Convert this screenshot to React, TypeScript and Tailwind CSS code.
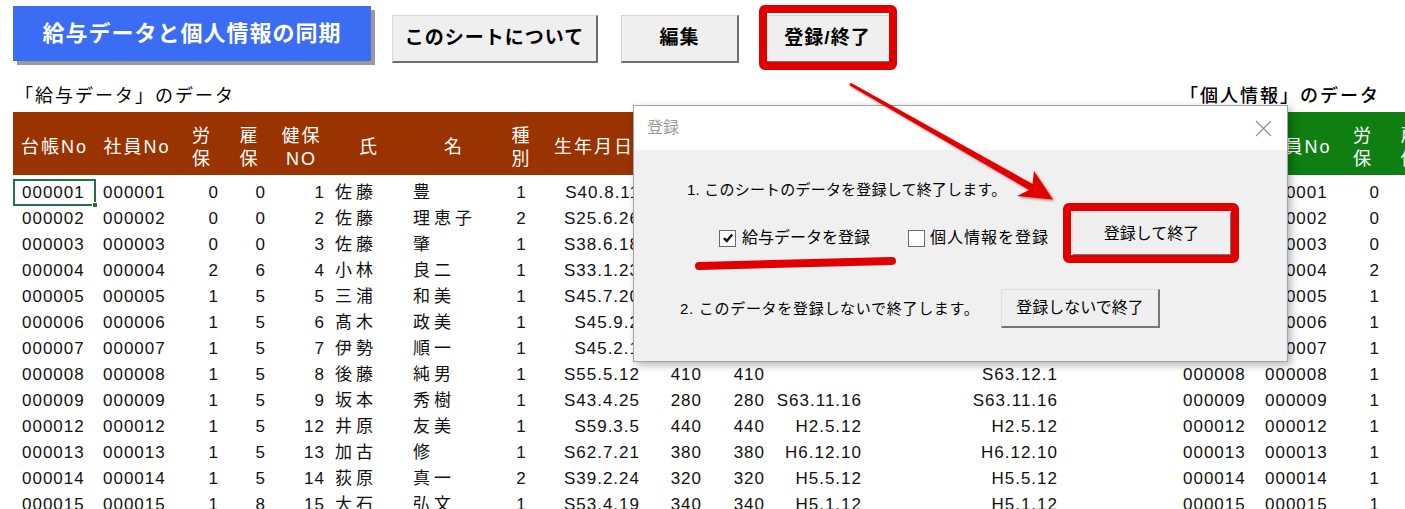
import React from 'react';

type Col = { w: string; td: string };

const leftCols: Col[] = [
    { w: 'w-[83px]', td: 'pl-[9px]' },
    { w: 'w-[82px]', td: 'pl-[7px]' },
    { w: 'w-[48px]', td: 'text-right pr-[7px]' },
    { w: 'w-[47px]', td: 'text-right pr-[7px]' },
    { w: 'w-[57px]', td: 'text-right pr-[5px]' },
    { w: 'w-[78px]', td: 'pl-[5px] tracking-[4px]' },
    { w: 'w-[92px]', td: 'pl-[5px] tracking-[4px]' },
    { w: 'w-[43px]', td: 'text-center' },
    { w: 'w-[102px]', td: 'text-right pr-[5px]' },
    { w: 'w-[62px]', td: 'text-right pr-[5px]' },
    { w: 'w-[63px]', td: 'text-right pr-[5px]' },
    { w: 'w-[97px]', td: 'text-right pr-[5px]' },
    { w: 'w-[196px]', td: 'text-right pr-[5px]' },
    { w: 'w-[111px]', td: '' },
];

const rightCols: Col[] = [
    { w: 'w-[83px]', td: 'pl-[9px]' },
    { w: 'w-[82px]', td: 'pl-[8px]' },
    { w: 'w-[48px]', td: 'text-right pr-[7px]' },
    { w: 'w-[47px]', td: 'text-right pr-[7px]' },
];

const leftHeaders = [
    ['台帳No'], ['社員No'], ['労', '保'], ['雇', '保'], ['健保', 'NO'], ['氏'], ['名'], ['種', '別'],
    ['生年月日'], ['標準', '報酬'], ['算定', '報酬'], ['資格', '取得日'], ['入社日'], [''],
];
const rightHeaders = [['台帳No'], ['社員No'], ['労', '保'], ['雇', '保']];

// 台帳No, 社員No, 労保, 雇保, 健保NO, 氏, 名, 種別, 生年月日, 標準, 算定, 資格取得日, 入社日
const rows: string[][] = [
    ['000001', '000001', '0', '0', '1', '佐藤', '豊', '1', 'S40.8.11', '360', '360', 'S63.4.1', 'S63.4.1', ''],
    ['000002', '000002', '0', '0', '2', '佐藤', '理恵子', '2', 'S25.6.26', '300', '300', 'S63.4.1', 'S63.4.1', ''],
    ['000003', '000003', '0', '0', '3', '佐藤', '肇', '1', 'S38.6.18', '300', '300', 'S63.4.1', 'S63.4.1', ''],
    ['000004', '000004', '2', '6', '4', '小林', '良二', '1', 'S33.1.23', '380', '380', 'S63.4.1', 'S63.4.1', ''],
    ['000005', '000005', '1', '5', '5', '三浦', '和美', '1', 'S45.7.20', '320', '320', 'S63.4.1', 'S63.4.1', ''],
    ['000006', '000006', '1', '5', '6', '髙木', '政美', '1', 'S45.9.2', '300', '300', 'S63.4.1', 'S63.4.1', ''],
    ['000007', '000007', '1', '5', '7', '伊勢', '順一', '1', 'S45.2.1', '300', '300', 'S63.4.1', 'S63.4.1', ''],
    ['000008', '000008', '1', '5', '8', '後藤', '純男', '1', 'S55.5.12', '410', '410', '', 'S63.12.1', ''],
    ['000009', '000009', '1', '5', '9', '坂本', '秀樹', '1', 'S43.4.25', '280', '280', 'S63.11.16', 'S63.11.16', ''],
    ['000012', '000012', '1', '5', '12', '井原', '友美', '1', 'S59.3.5', '440', '440', 'H2.5.12', 'H2.5.12', ''],
    ['000013', '000013', '1', '5', '13', '加古', '修', '1', 'S62.7.21', '380', '380', 'H6.12.10', 'H6.12.10', ''],
    ['000014', '000014', '1', '5', '14', '荻原', '真一', '2', 'S39.2.24', '320', '320', 'H5.5.12', 'H5.5.12', ''],
    ['000015', '000015', '1', '8', '15', '大石', '弘文', '1', 'S53.4.19', '340', '340', 'H5.1.12', 'H5.1.12', ''],
];

function HeaderRow({ cols, labels, bg }: { cols: Col[]; labels: string[][]; bg: string }) {
    return (
        <div className={`flex h-[63px] pt-[8px] text-[18px] tracking-[2px] text-white ${bg}`}>
            {cols.map((c, i) => (
                <div key={i} className={`${c.w} shrink-0 flex flex-col items-center justify-center leading-[23px]`}>
                    {labels[i].map((l, j) => (
                        <span key={j} className="whitespace-nowrap">{l}</span>
                    ))}
                </div>
            ))}
        </div>
    );
}

function SheetButton({ label, className }: { label: string; className: string }) {
    return (
        <div
            className={`flex h-[48px] items-center justify-center border-t border-l border-[#d6d6d6] border-r-2 border-b-2 border-r-[#6f6f6f] border-b-[#6f6f6f] bg-[#efefef] text-[19px] font-bold tracking-[1px] text-black ${className}`}
        >
            {label}
        </div>
    );
}

function DialogButton({ label, className }: { label: string; className: string }) {
    return (
        <div
            className={`flex items-center justify-center border-t border-l border-[#dedede] border-r-2 border-b-2 border-r-[#777] border-b-[#777] bg-[#efefef] text-[16px] text-black ${className}`}
        >
            {label}
        </div>
    );
}

function CheckBox({ checked }: { checked: boolean }) {
    return (
        <div className="flex h-[17px] w-[17px] shrink-0 items-center justify-center border border-[#6a6a6a] bg-white">
            {checked && (
                <svg width="12" height="12" viewBox="0 0 12 12">
                    <path d="M2 6.2 L4.8 9 L10.2 2.6" fill="none" stroke="#111" strokeWidth="2.4" />
                </svg>
            )}
        </div>
    );
}

function Dialog() {
    return (
        <div className="absolute left-[633px] top-[105px] flex h-[257px] w-[655px] flex-col border border-[#a3a3a3] bg-[#f0f0f0] shadow-[3px_3px_8px_rgba(0,0,0,0.3)]">
            <div className="flex h-[44px] items-center justify-between bg-white pl-[13px] pr-[15px]">
                <span className="text-[16px] text-[#9b9b9b]">登録</span>
                <svg width="17" height="17" viewBox="0 0 17 17">
                    <path d="M1 1 L16 16 M16 1 L1 16" stroke="#8c8c8c" strokeWidth="1.1" />
                </svg>
            </div>
            <div className="flex flex-1 flex-col pt-[29px] text-black">
                <div className="pl-[53px] text-[15px] leading-[22px] tracking-[0.2px]">
                    1. このシートのデータを登録して終了します。
                </div>
                <div className="mt-[11px] flex items-start pl-[85px]">
                    <div className="mt-[17px] flex w-[189px] items-center gap-[6px]">
                        <CheckBox checked />
                        <span className="text-[16px] leading-[18px]">給与データを登録</span>
                    </div>
                    <div className="mt-[17px] flex w-[164px] items-center gap-[5px]">
                        <CheckBox checked={false} />
                        <span className="text-[16px] leading-[18px] tracking-[1px]">個人情報を登録</span>
                    </div>
                    <DialogButton label="登録して終了" className="h-[44px] w-[160px]" />
                </div>
                <div className="mt-[33px] flex items-center pl-[46px]">
                    <div className="w-[321px] text-[15px] leading-[22px] tracking-[0.7px]">
                        2. このデータを登録しないで終了します。
                    </div>
                    <DialogButton label="登録しないで終了" className="h-[39px] w-[159px]" />
                </div>
            </div>
        </div>
    );
}

function Annotations() {
    return (
        <svg className="pointer-events-none absolute left-0 top-0" width="1405" height="509" viewBox="0 0 1405 509">
            <defs>
                <filter id="redShadow" x="-10%" y="-10%" width="130%" height="130%">
                    <feDropShadow dx="1.5" dy="1.5" stdDeviation="1" floodColor="#550000" floodOpacity="0.45" />
                </filter>
            </defs>
            <rect x="763" y="9" width="130" height="57" rx="2" fill="none" stroke="#e00000" strokeWidth="8" strokeLinejoin="round" />
            <rect x="1067" y="207" width="168" height="52" rx="2" fill="none" stroke="#e00000" strokeWidth="8" strokeLinejoin="round" />
            <polygon
                points="850.7,82.7 1032.5,184 1034,171 1053,199.5 1017,196 1029.1,190 849.3,85.3"
                fill="#e00000"
                filter="url(#redShadow)"
            />
            <line x1="699" y1="266" x2="892" y2="261" stroke="#e00000" strokeWidth="8" strokeLinecap="round" />
        </svg>
    );
}

export default function App() {
    return (
        <div className="relative h-[509px] w-[1405px] overflow-hidden bg-white font-['Liberation_Sans','Noto_Sans_CJK_JP',sans-serif] text-[#111]">
            <div className="flex h-[70px] items-start pl-[13px]">
                <div className="mt-[6px] flex h-[55px] w-[358px] items-center justify-center bg-[#3b6cf4] text-[22px] font-bold tracking-[1px] text-white shadow-[4px_4px_0_#999]">
                    給与データと個人情報の同期
                </div>
                <SheetButton label="このシートについて" className="ml-[21px] mt-[15px] w-[206px]" />
                <SheetButton label="編集" className="ml-[23px] mt-[15px] w-[118px]" />
                <SheetButton label="登録/終了" className="ml-[25px] mt-[15px] w-[128px]" />
            </div>

            <div className="flex h-[42px] items-end justify-between pb-[4px] pl-[15px] pr-[25px] text-[18px] leading-[24px] tracking-[2px] text-black">
                <span>「給与データ」のデータ</span>
                <span className="font-medium">「個人情報」のデータ</span>
            </div>

            <div className="flex pl-[13px]">
                <div className="w-[1161px] shrink-0">
                    <HeaderRow cols={leftCols} labels={leftHeaders} bg="bg-[#993300]" />
                    <div className="pt-[5px] text-[17px] tracking-[1px]">
                        {rows.map((r, ri) => (
                            <div key={ri} className="flex h-[26px] items-center leading-[26px]">
                                {leftCols.map((c, ci) => (
                                    <div key={ci} className={`${c.w} ${c.td} relative shrink-0 whitespace-nowrap`}>
                                        {r[ci]}
                                        {ri === 0 && ci === 0 && (
                                            <div className="absolute inset-x-0 -top-[1px] bottom-[0px] border-2 border-[#217346]">
                                                <div className="absolute -bottom-[4px] -right-[4px] h-[6px] w-[6px] border border-white bg-[#217346]" />
                                            </div>
                                        )}
                                    </div>
                                ))}
                            </div>
                        ))}
                    </div>
                </div>
                <div className="w-[260px] shrink-0">
                    <HeaderRow cols={rightCols} labels={rightHeaders} bg="bg-[#0f7f12]" />
                    <div className="pt-[5px] text-[17px] tracking-[1px]">
                        {rows.map((r, ri) => (
                            <div key={ri} className="flex h-[26px] items-center leading-[26px]">
                                {rightCols.map((c, ci) => (
                                    <div key={ci} className={`${c.w} ${c.td} shrink-0 whitespace-nowrap`}>
                                        {r[ci]}
                                    </div>
                                ))}
                            </div>
                        ))}
                    </div>
                </div>
            </div>

            <Dialog />
            <Annotations />
        </div>
    );
}
